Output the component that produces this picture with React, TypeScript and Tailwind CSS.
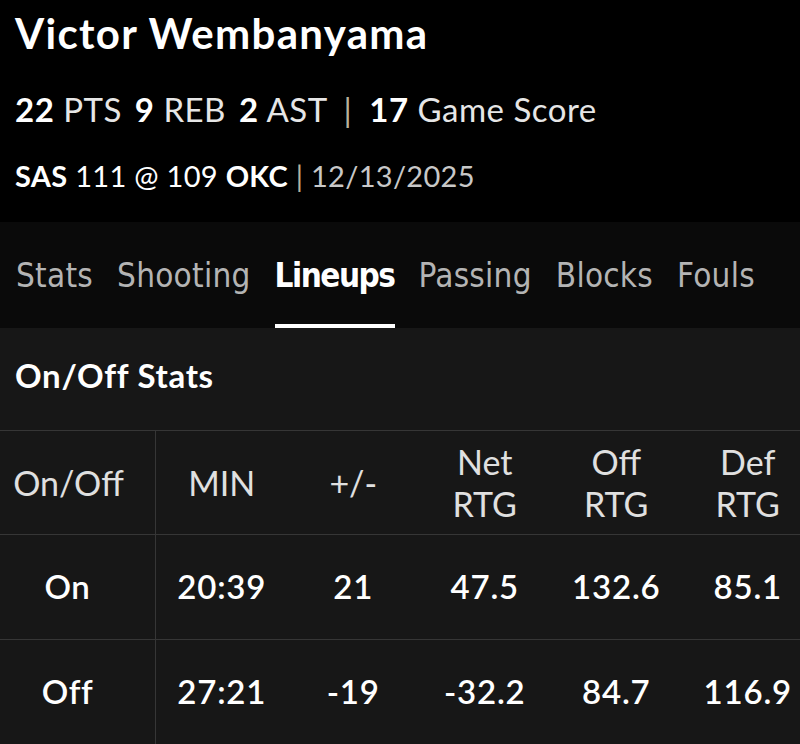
import React from "react";

const TABS = ["Stats", "Shooting", "Lineups", "Passing", "Blocks", "Fouls"];

const HEAD: string[][] = [["MIN"], ["+/-"], ["Net", "RTG"], ["Off", "RTG"], ["Def", "RTG"]];

const ROWS = [
  { label: "On", vals: ["20:39", "21", "47.5", "132.6", "85.1"] },
  { label: "Off", vals: ["27:21", "-19", "-32.2", "84.7", "116.9"] },
];

export default function App() {
  return (
    <div className="w-[800px] h-[744px] overflow-hidden bg-[#171717] font-['Lato',sans-serif]">
      {/* Header */}
      <header className="h-[222px] bg-black px-[15px] pt-[9px]">
        <h1 className="text-[42px] leading-[48px] tracking-[1.3px] font-bold text-white">Victor Wembanyama</h1>
        <div className="mt-[33px] text-[33px] leading-[38px] tracking-[0.5px] text-[#e6e6e6] whitespace-nowrap">
          <b className="font-bold text-white">22</b> PTS <b className="ml-[4px] font-bold text-white">9</b> REB{" "}
          <b className="ml-[4px] font-bold text-white">2</b> AST <span className="mx-[8px] text-[#b9b29a]">|</span>{" "}
          <b className="font-bold text-white">17</b> Game Score
        </div>
        <div className="mt-[30px] text-[29px] leading-[36px] tracking-[0.3px] text-white whitespace-nowrap">
          <b className="font-bold">SAS</b> 111 @ 109 <b className="font-bold">OKC</b>{" "}
          <span className="text-[#b9b29a]">|</span> <span className="text-[#c8c8c8]">12/13/2025</span>
        </div>
      </header>

      {/* Tabs */}
      <nav className="h-[106px] bg-[#0a0a0a] flex items-end gap-[24px] px-[16px] font-['DejaVu_Sans_Condensed','DejaVu_Sans',sans-serif]">
        {TABS.map((t) => (
          <div key={t} className="flex flex-col items-stretch">
            <span
              className={`text-[33px] leading-[36px] ${t === "Lineups" ? "font-bold tracking-[-1.5px] text-white" : "tracking-[0.25px] text-[#b4b4b4]"}`}
            >
              {t}
            </span>
            <div className={`mt-[30px] h-[4px] ${t === "Lineups" ? "bg-white" : "bg-transparent"}`} />
          </div>
        ))}
      </nav>

      {/* On/Off */}
      <section className="pt-[29px]">
        <h2 className="px-[15px] text-[33px] leading-[36px] tracking-[0.7px] font-bold text-white">On/Off Stats</h2>
        <div className="mt-[37px] border-t border-[#363636] grid grid-cols-[156px_repeat(5,131.5px)]">
          <div className="h-[104px] border-r border-b border-[#363636] flex items-center justify-center pr-[18px] text-[34px] text-[#e0e0e0]">
            On/Off
          </div>
          {HEAD.map((h, i) => (
            <div key={i} className="h-[104px] border-b border-[#363636] flex flex-col items-center justify-center text-[34px] leading-[42px] text-[#e0e0e0]">
              {h.map((l) => (
                <span key={l}>{l}</span>
              ))}
            </div>
          ))}
          {ROWS.map((r) => (
            <React.Fragment key={r.label}>
              <div className="h-[105px] border-r border-b border-[#363636] flex items-center justify-center pr-[20px] text-[33px] tracking-[0.6px] font-semibold text-white">
                {r.label}
              </div>
              {r.vals.map((v, i) => (
                <div key={i} className="h-[105px] border-b border-[#363636] flex items-center justify-center text-[33px] tracking-[0.8px] font-semibold text-white">
                  {v}
                </div>
              ))}
            </React.Fragment>
          ))}
        </div>
      </section>
    </div>
  );
}
